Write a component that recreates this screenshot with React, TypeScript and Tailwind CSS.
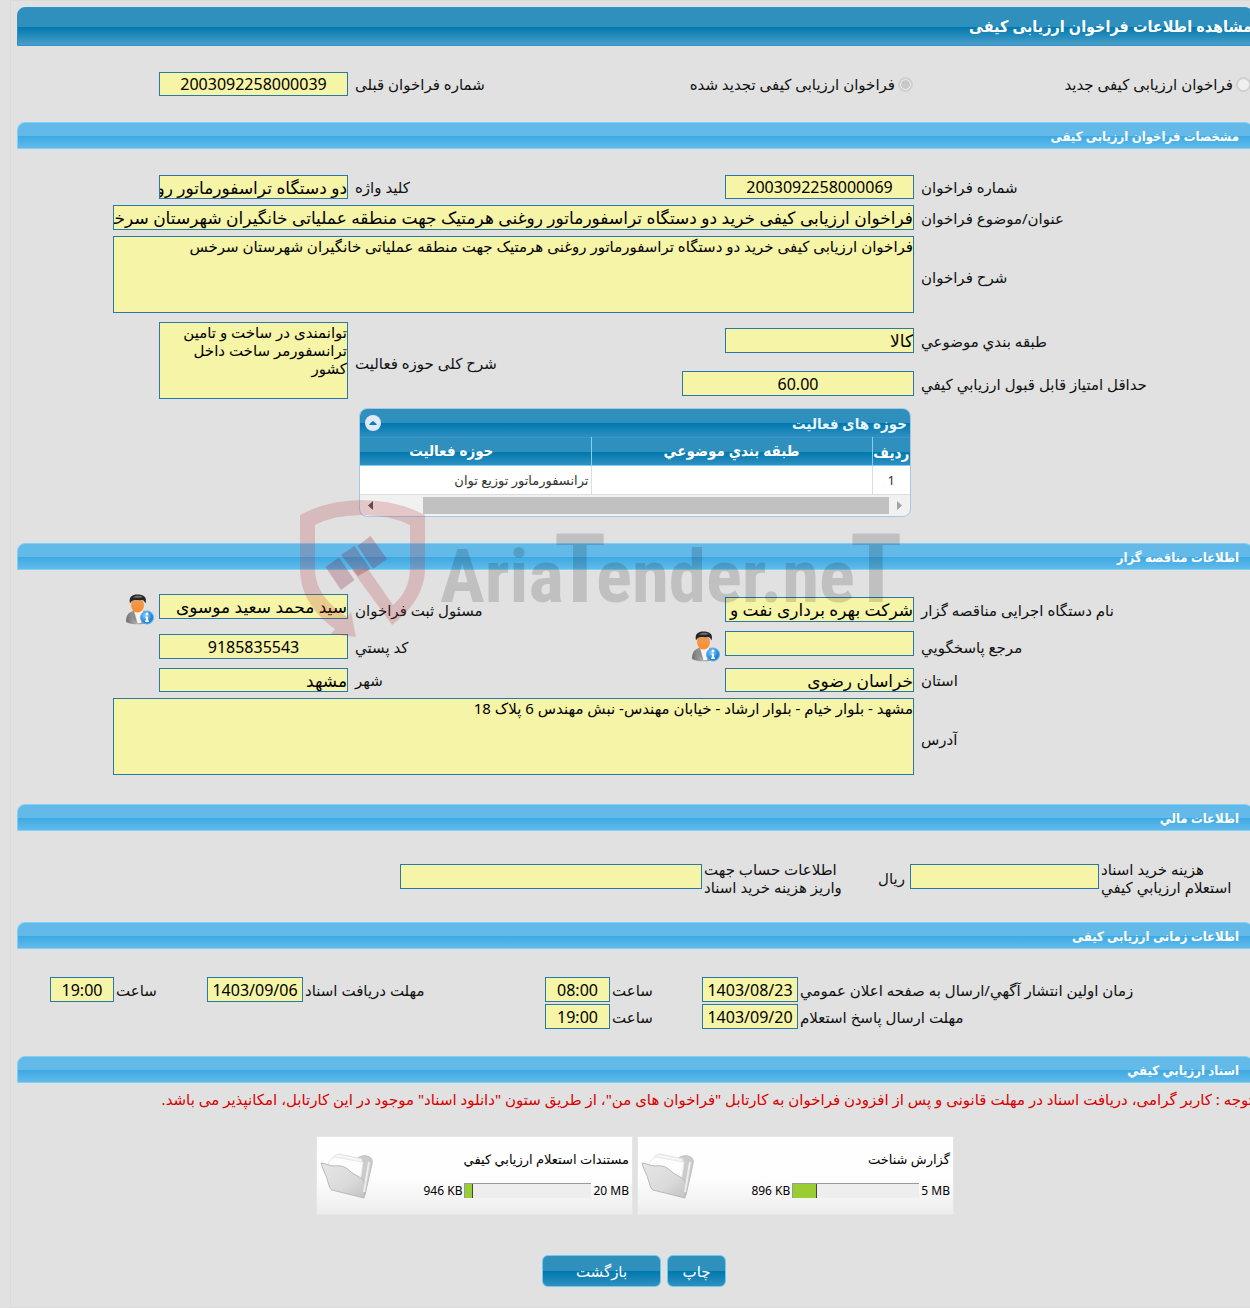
import { useId, type ReactNode } from 'react'
import clsx from 'clsx'

const BOX = 'shrink-0 border border-[#2779aa] bg-[#f6f4a6] text-black outline-none'
const ROW =
  'grid grid-cols-[minmax(0,336fr)_minmax(0,189fr)_minmax(0,377fr)_minmax(0,348fr)] items-center'
const LABEL = 'block pl-[7px] text-left whitespace-nowrap'
const HEADING = "font-['Noto_Sans','DejaVu_Sans_Condensed',sans-serif] font-bold"

function SectionTitle({ children, className }: { children: ReactNode; className?: string }) {
  return (
    <h2
      className={clsx(
        HEADING,
        '-mr-[3px] ml-[17px] flex h-[27px] items-center rounded-t-lg border border-[#7bd2f6] bg-[linear-gradient(#63bae9_0%,#63bae9_50%,#3aa9e3_51%,#63bae9_100%)] pr-[13px] text-[13px] text-white',
        className,
      )}
    >
      {children}
    </h2>
  )
}

interface FieldProps {
  id: string
  value?: string
  center?: boolean
  short?: boolean
  className?: string
}

function TextField({ id, value = '', center, short, className = 'w-[189px]' }: FieldProps) {
  return (
    <input
      id={id}
      type="text"
      readOnly
      defaultValue={value}
      className={clsx(
        BOX,
        short ? 'h-[24px]' : 'h-[25px]',
        center ? 'text-center text-[16px]' : 'text-[17px]',
        className,
      )}
    />
  )
}

function TextBlock({ id, value, className }: FieldProps) {
  return (
    <textarea
      id={id}
      readOnly
      defaultValue={value}
      className={clsx(BOX, 'block h-[77px] resize-none overflow-hidden leading-[18px]', className)}
    />
  )
}

function PersonInfoIcon() {
  const id = useId()
  return (
    <svg width="29" height="31" viewBox="0 0 29 31" aria-hidden="true" className="shrink-0">
      <defs>
        <linearGradient id={`${id}s`} x1="0" x2="1">
          <stop offset="0" stopColor="#6f6f6f" />
          <stop offset="0.5" stopColor="#b5b5b5" />
          <stop offset="1" stopColor="#777" />
        </linearGradient>
        <linearGradient id={`${id}f`} x1="0" x2="0" y1="0" y2="1">
          <stop offset="0" stopColor="#e8a060" />
          <stop offset="1" stopColor="#ff8a28" />
        </linearGradient>
        <radialGradient id={`${id}i`} cx="0.4" cy="0.35">
          <stop offset="0" stopColor="#8fd0fa" />
          <stop offset="1" stopColor="#1f84d6" />
        </radialGradient>
      </defs>
      <path d="M1 28c0-6 2-9.500 7-11l9-.5c5 1.500 7 4 7 8v4c-5 2.500-18 2.500-23-.5z" fill={`url(#${id}s)`} />
      <path d="M9 16l3.500 13h3.500l2.500-12.500z" fill="#f4f4f4" />
      <path d="M8 16l4 13-5-6zM19 16l-2 13 4-8z" fill="#8c8c8c" />
      <ellipse cx="12.500" cy="11" rx="6.500" ry="7.500" fill={`url(#${id}f)`} />
      <path d="M5 9.500C3.500 3 7 .5 12.500 .5s10 2 8 9c-1-2-1.500-3-3-3.500-4 .5-7.500-.5-9.500.5C6.500 7 5.800 8 5 9.500z" fill="#262626" />
      <path d="M8 3.500c2-2 7-2.500 10-.5-3 1-7 1-10 .5z" fill="#707070" />
      <circle cx="22" cy="23.500" r="6.500" fill={`url(#${id}i)`} stroke="#5db0ee" />
      <path d="M20.500 22.500h2.500v4h1v1.500h-4v-1.500h1v-2.500h-.5z" fill="#fff" />
      <circle cx="22" cy="20" r="1.400" fill="#fff" />
    </svg>
  )
}

function FolderIcon() {
  const id = useId()
  return (
    <svg width="54" height="48" viewBox="0 0 54 48" aria-hidden="true" className="shrink-0">
      <defs>
        <linearGradient id={id} x1="0" x2="1" y1="0" y2="1">
          <stop offset="0" stopColor="#e6e6e6" />
          <stop offset="0.6" stopColor="#dadada" />
          <stop offset="1" stopColor="#c2c2c2" />
        </linearGradient>
      </defs>
      <path d="M34 9c4-4 8-6 13-5 4 1 6 3 5 8l-7 31-3 3z" fill="#cbcbcb" stroke="#c0c0c0" />
      <path d="M12 9c1-4 3-7 7-7l23 5-2 28z" fill="#f6f6f6" stroke="#e2e2e2" />
      <path d="M8 12c2-4 3-6 7-7l28 5c-1 8-2 16-4 20z" fill="#fdfdfd" stroke="#e8e8e8" />
      <path
        d="M1 11c4 0 8 3 13 3 8-1 12 1 17 6 5 4 11 5 13 10 2 4 1 11 0 16L12 38c-2-1-3-4-4-8C6 22 2 16 1 11z"
        fill={`url(#${id})`}
        stroke="#b9b9b9"
      />
      <path d="M49 10l-5 30" stroke="#ededed" strokeWidth="2" />
    </svg>
  )
}

function Watermark() {
  return (
    <svg
      className="pointer-events-none absolute top-[495px] left-[295px]"
      width="620"
      height="145"
      viewBox="295 495 620 145"
      aria-hidden="true"
    >
      <path
        fill="#b8343c"
        fillOpacity="0.22"
        d="M300 515Q328 500 362 500T425 515V568C425 592 411 610 392 625L352 570 368 569 393 605C405 595 410 582 410 568V525Q390 515 362 515T315 525V568C315 590 328 604 347 617L351 612 356 637 331 634 335 629C315 615 300 595 300 568Z"
      />
      <g fill="#7c1430" fillOpacity="0.25">
        <path d="M370.500 536L387 559 373 569 357.500 546Z" />
        <path d="M354.500 546L370.500 569 358 576 341 555Z" />
        <path d="M339 557.500L354.500 580 341 590 325.500 567Z" />
      </g>
      <text
        y="602"
        direction="ltr"
        fontFamily="'Liberation Sans Narrow', 'Roboto Condensed', 'Liberation Sans', sans-serif"
        fontWeight="700"
        fontSize="75"
        fill="#000"
        opacity="0.14"
      >
        <tspan x="440">Aria</tspan>
        <tspan x="554" fontSize="96">T</tspan>
        <tspan x="596">ender.ne</tspan>
        <tspan x="850" fontSize="96">T</tspan>
      </text>
    </svg>
  )
}

function ActivityPanel() {
  return (
    <div className="mr-[3px] w-[552px] overflow-hidden rounded-lg border border-[#a3c9e6] bg-[#f1f1f1] text-[13px]">
      <div className="flex h-[28px] items-center justify-between bg-[linear-gradient(#2f90be_0%,#2f90be_50%,#0078ae_51%,#3090c0_100%)] pr-[3px] pl-[5px]">
        <h3 className={clsx(HEADING, 'text-[15px] text-[#e6f4fb]')}>حوزه های فعالیت</h3>
        <button type="button" aria-label="جمع کردن" className="grid size-4 place-items-center rounded-full bg-[#dfe9f7]">
          <svg width="8" height="4" viewBox="0 0 8 4" aria-hidden="true">
            <path d="M0 4Q1 2 4 0 7 2 8 4z" fill="#0b7fb4" />
          </svg>
        </button>
      </div>
      <table className="w-full table-fixed border-collapse bg-white">
        <thead className={HEADING}>
          <tr className="h-[28px] border-t border-[#3a96d0] border-b border-b-[#7bd2f6] bg-[linear-gradient(#2f90be_0%,#2f90be_50%,#0078ae_51%,#3090c0_100%)] text-[15px] text-white">
            <th className="w-[38px] p-0">ردیف</th>
            <th className="w-[281px] border-x border-[#7bd2f6] p-0 pb-[3px]">طبقه بندي موضوعي</th>
            <th className="p-0 pr-[48px] pb-[3px]">حوزه فعالیت</th>
          </tr>
        </thead>
        <tbody>
          <tr className="h-[29px] border-b border-[#ddd] text-[#333]">
            <td className="p-0 text-center">1</td>
            <td className="border-x border-[#ddd] p-0" />
            <td className="p-0 pr-[2px]">ترانسفورماتور توزیع توان</td>
          </tr>
        </tbody>
      </table>
      {/* horizontal scroll bar */}
      <div className="flex h-[21px] items-center justify-between px-[8px]">
        <svg width="5" height="9" viewBox="0 0 5 9" aria-hidden="true">
          <path d="M0 0L5 4.500 0 9z" fill="#a3a3a3" />
        </svg>
        <div className="mr-[8px] ml-auto h-[17px] w-[466px] bg-[#c1c1c1]" />
        <svg width="5" height="9" viewBox="0 0 5 9" aria-hidden="true">
          <path d="M5 0L0 4.500 5 9z" fill="#505050" />
        </svg>
      </div>
    </div>
  )
}

interface DocumentCardProps {
  title: string
  limit: string
  used: string
  percent: number
}

function DocumentCard({ title, limit, used, percent }: DocumentCardProps) {
  return (
    <div className="flex h-[79px] w-[317px] items-center justify-between border border-[#e6e6e6] bg-[linear-gradient(#fff_0%,#fdfdfd_55%,#ededed_100%)] px-[3px] text-black">
      <div className="flex flex-col gap-[15px] pb-[3px]">
        <a href="#" className="text-[13px] leading-[18px]">{title}</a>
        <div className="flex items-center gap-[2px] text-[12px] leading-[15px]">
          <span dir="ltr">{limit}</span>
          <div dir="ltr" className="h-[15px] w-[127px] border-t border-l border-[#999] bg-[#eee]">
            <div className="h-full border-r border-[#444] bg-[#9acd32]" style={{ width: `${percent}%` }} />
          </div>
          <span dir="ltr">{used}</span>
        </div>
      </div>
      <FolderIcon />
    </div>
  )
}

function ActionButton({ children, className }: { children: ReactNode; className?: string }) {
  return (
    <button
      type="button"
      className={clsx(
        'h-[32px] rounded-md border border-[#6fcaf0] bg-[linear-gradient(#2f90be_0%,#2f90be_50%,#0078ae_51%,#3090c0_100%)] text-[15px] text-white',
        className,
      )}
    >
      {children}
    </button>
  )
}

const RADIO =
  'size-[15px] shrink-0 appearance-none rounded-full border-2 border-[#d0d0d0] bg-[#f0f0f0] checked:bg-[#c8c8c8] checked:shadow-[inset_0_0_0_1px_#eee]'

export default function App() {
  return (
    <main
      dir="rtl"
      lang="fa"
      className="relative overflow-hidden bg-[#e1e1e1] font-['Noto_Sans','DejaVu_Sans',sans-serif] text-[15px] leading-[18px] text-[#111]"
    >
      <div className="ml-[10px] border-y border-l border-[#dadada]">
        <div className="-ml-[11px] pt-[6px] pb-[20px]">
          <h1
            className={clsx(
              HEADING,
              '-mr-[3px] ml-[17px] flex h-[39px] items-center rounded-t-lg border border-[#3390cf] bg-[linear-gradient(#2f90be_0%,#2f90be_50%,#0078ae_51%,#4a9fc8_100%)] pb-[2px] text-[16px] text-white',
            )}
          >
            مشاهده اطلاعات فراخوان ارزیابی کیفی
          </h1>

          <div className={clsx(ROW, 'mt-[26px]')}>
            <label className="flex items-center gap-[3px]">
              <input type="radio" name="kind" disabled className={clsx(RADIO, '-mr-px')} />
              فراخوان ارزیابی کیفی جدید
            </label>
            <div className="col-span-2 flex items-center justify-between pr-px">
              <label className="flex items-center gap-[3px]">
                <input type="radio" name="kind" disabled defaultChecked className={RADIO} />
                فراخوان ارزیابی کیفی تجدید شده
              </label>
              <label htmlFor="prev-no" className={LABEL}>شماره فراخوان قبلی</label>
            </div>
            <TextField id="prev-no" value="2003092258000039" center short />
          </div>

          <SectionTitle className="mt-[26px]">مشخصات فراخوان ارزیابی کیفی</SectionTitle>
          <div className="flex flex-col gap-[6px] pt-[26px]">
            <div className={ROW}>
              <label htmlFor="call-no" className={LABEL}>شماره فراخوان</label>
              <TextField id="call-no" value="2003092258000069" center short />
              <label htmlFor="keyword" className={LABEL}>کلید واژه</label>
              <TextField id="keyword" value="دو دستگاه تراسفورماتور روغنی هرمتیک" short />
            </div>
            <div className={ROW}>
              <label htmlFor="subject" className={LABEL}>عنوان/موضوع فراخوان</label>
              <div className="col-span-3 flex">
                <TextField
                  id="subject"
                  className="w-[801px]"
                  value="فراخوان ارزیابی کیفی خرید دو دستگاه تراسفورماتور روغنی هرمتیک جهت منطقه عملیاتی خانگیران شهرستان سرخس"
                />
              </div>
            </div>
            <div className={ROW}>
              <label htmlFor="details" className={clsx(LABEL, 'pt-[4px]')}>شرح فراخوان</label>
              <div className="col-span-3">
                <TextBlock
                  id="details"
                  className="w-[801px]"
                  value="فراخوان ارزیابی کیفی خرید دو دستگاه تراسفورماتور روغنی هرمتیک جهت منطقه عملیاتی خانگیران شهرستان سرخس"
                />
              </div>
            </div>
          </div>
          <div className={clsx(ROW, 'mt-[9px] grid-rows-[37px_49px]')}>
            <label htmlFor="category" className={LABEL}>طبقه بندي موضوعي</label>
            <TextField id="category" value="کالا" />
            <label htmlFor="scope" className={clsx(LABEL, 'row-span-2 pb-[4px]')}>شرح کلی حوزه فعالیت</label>
            <TextBlock
              id="scope"
              className="row-span-2 w-[189px] self-start"
              value="توانمندی در ساخت و تامین ترانسفورمر ساخت داخل کشور"
            />
            <label htmlFor="score" className={LABEL}>حداقل امتیاز قابل قبول ارزيابي کيفي</label>
            <TextField id="score" value="60.00" center className="w-[232px]" />
          </div>
          <div className={ROW}>
            <div className="col-span-3 col-start-2">
              <ActivityPanel />
            </div>
          </div>

          <SectionTitle className="mt-[26px]">اطلاعات مناقصه گزار</SectionTitle>
          <div className="flex flex-col gap-[6px] pt-[24px]">
            <div className={ROW}>
              <label htmlFor="agency" className={LABEL}>نام دستگاه اجرایی مناقصه گزار</label>
              <TextField id="agency" value="شرکت بهره برداری نفت و گاز شرق" />
              <label htmlFor="registrar" className={LABEL}>مسئول ثبت فراخوان</label>
              <div className="flex items-start gap-[5px]">
                <TextField id="registrar" value="سید محمد سعید موسوی" />
                <PersonInfoIcon />
              </div>
            </div>
            <div className={ROW}>
              <label htmlFor="contact" className={LABEL}>مرجع پاسخگويي</label>
              <div className="flex items-start gap-[5px]">
                <TextField id="contact" />
                <PersonInfoIcon />
              </div>
              <label htmlFor="postal" className={LABEL}>کد پستي</label>
              <TextField id="postal" value="9185835543" center />
            </div>
            <div className={ROW}>
              <label htmlFor="province" className={LABEL}>استان</label>
              <TextField id="province" value="خراسان رضوی" short />
              <label htmlFor="city" className={LABEL}>شهر</label>
              <TextField id="city" value="مشهد" short />
            </div>
            <div className={ROW}>
              <label htmlFor="address" className={clsx(LABEL, 'pt-[4px]')}>آدرس</label>
              <div className="col-span-3">
                <TextBlock
                  id="address"
                  className="w-[801px]"
                  value="مشهد - بلوار خیام - بلوار ارشاد - خیابان مهندس- نبش مهندس 6 پلاک 18"
                />
              </div>
            </div>
          </div>

          <SectionTitle className="mt-[29px]">اطلاعات مالي</SectionTitle>
          <div className="grid grid-cols-[151fr_189fr_208fr_702fr] items-center pt-[29px]">
            <label htmlFor="doc-cost" className="pl-[2px] text-left whitespace-nowrap">
              هزینه خرید اسناد
              <br />
              استعلام ارزيابي کيفي
            </label>
            <TextField id="doc-cost" className="mb-[4px] w-[189px]" />
            <div className="flex items-center justify-between pr-[5px] pl-[2px]">
              <span>ریال</span>
              <label htmlFor="account" className="text-left whitespace-nowrap">
                اطلاعات حساب جهت
                <br />
                واریز هزینه خرید اسناد
              </label>
            </div>
            <TextField id="account" className="mb-[4px] w-[302px]" />
          </div>

          <SectionTitle className="mt-[26px]">اطلاعات زمانی ارزیابی کیفی</SectionTitle>
          <div className="grid grid-cols-[452fr_96fr_92fr_65fr_242fr_96fr_93fr_64fr_50fr] items-center gap-y-[2px] pt-[28px]">
            <label htmlFor="publish-date" className="pl-[2px] text-left whitespace-nowrap">
              زمان اولین انتشار آگهي/ارسال به صفحه اعلان عمومي
            </label>
            <TextField id="publish-date" value="1403/08/23" center className="w-full" />
            <label htmlFor="publish-time" className="pl-[2px] text-left">ساعت</label>
            <TextField id="publish-time" value="08:00" center className="w-full" />
            <label htmlFor="receive-date" className="pl-[2px] text-left">مهلت دریافت اسناد</label>
            <TextField id="receive-date" value="1403/09/06" center className="w-full" />
            <label htmlFor="receive-time" className="pl-[2px] text-left">ساعت</label>
            <TextField id="receive-time" value="19:00" center className="w-full" />
            <label htmlFor="reply-date" className="col-start-1 pl-[2px] text-left">مهلت ارسال پاسخ استعلام</label>
            <TextField id="reply-date" value="1403/09/20" center className="w-full" />
            <label htmlFor="reply-time" className="pl-[2px] text-left">ساعت</label>
            <TextField id="reply-time" value="19:00" center className="w-full" />
          </div>

          <SectionTitle className="mt-[27px]">اسناد ارزیابي کیفي</SectionTitle>
          <p className="-mr-[3px] mt-[7px] whitespace-nowrap text-[#d90000]">
            توجه : کاربر گرامی، دریافت اسناد در مهلت قانونی و پس از افزودن فراخوان به کارتابل "فراخوان های من"، از طریق ستون
            "دانلود اسناد" موجود در این کارتابل، امکانپذیر می باشد.
          </p>
          <div className="mt-[28px] flex justify-center gap-[4px] pl-[20px]">
            <DocumentCard title="گزارش شناخت" limit="5 MB" used="896 KB" percent={19} />
            <DocumentCard title="مستندات استعلام ارزیابي کیفي" limit="20 MB" used="946 KB" percent={6} />
          </div>
          <div className="mt-[40px] flex justify-center gap-[6px] pl-[18px]">
            <ActionButton className="w-[59px]">چاپ</ActionButton>
            <ActionButton className="w-[119px]">بازگشت</ActionButton>
          </div>
        </div>
      </div>
      <Watermark />
    </main>
  )
}
